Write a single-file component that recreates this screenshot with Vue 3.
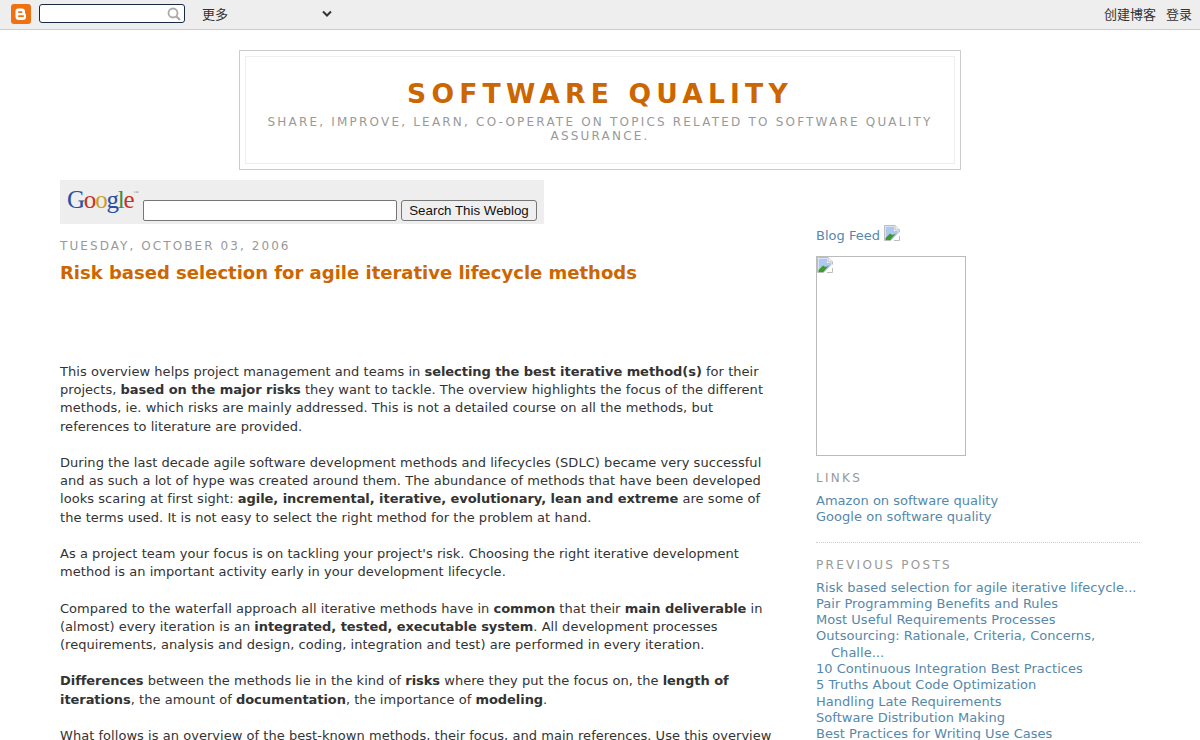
<script setup>
const links = ['Amazon on software quality', 'Google on software quality']
const posts = [
  'Risk based selection for agile iterative lifecycle...',
  'Pair Programming Benefits and Rules',
  'Most Useful Requirements Processes',
  'Outsourcing: Rationale, Criteria, Concerns, Challe...',
  '10 Continuous Integration Best Practices',
  '5 Truths About Code Optimization',
  'Handling Late Requirements',
  'Software Distribution Making',
  'Best Practices for Writing Use Cases'
]
</script>

<template>
  <div class="page">
    <div class="navbar">
      <svg class="logo" viewBox="0 0 20 20" width="20" height="20">
        <rect width="20" height="20" rx="3" fill="#ee7211" />
        <path d="M7 4.5h4a3 3 0 0 1 3 3V9a1.2 1.2 0 0 0 1 1v3a3 3 0 0 1-3 3H8a3.5 3.5 0 0 1-3.500-3.500V7A2.500 2.500 0 0 1 7 4.500z" fill="#fff" />
        <rect x="7" y="7.300" width="4.500" height="1.700" rx=".8" fill="#ee7211" />
        <rect x="7" y="11.300" width="6" height="1.700" rx=".8" fill="#ee7211" />
      </svg>
      <div class="navsearch">
        <svg viewBox="0 0 14 14" width="14" height="14" class="mag">
          <circle cx="6" cy="6" r="4.500" fill="none" stroke="#aaa" stroke-width="1.800" />
          <path d="M9.500 9.500l3.500 3.500" stroke="#aaa" stroke-width="2.200" />
        </svg>
      </div>
      <div class="more">
        <span class="navtext">更多</span>
        <svg viewBox="0 0 10 8" width="10" height="8"><path d="M1 1.500l4 4 4-4" fill="none" stroke="#333" stroke-width="2" /></svg>
      </div>
      <div class="nav-right">
        <span class="navtext">创建博客</span>
        <span class="navtext">登录</span>
      </div>
    </div>

    <header class="blog-header">
      <div class="header-inner">
        <h1>SOFTWARE QUALITY</h1>
        <p>SHARE, IMPROVE, LEARN, CO-OPERATE ON TOPICS RELATED TO SOFTWARE QUALITY ASSURANCE.</p>
      </div>
    </header>

    <div class="content">
      <main class="main">
        <form class="gsearch" @submit.prevent>
          <div class="glogo">
            <span class="b">G</span><span class="r">o</span><span class="y">o</span><span class="b">g</span><span class="g">l</span><span class="r">e</span><span class="tm">™</span>
          </div>
          <input type="text" class="ginput" />
          <button class="gbtn">Search This Weblog</button>
        </form>

        <h2 class="date">TUESDAY, OCTOBER 03, 2006</h2>
        <h3 class="title">Risk based selection for agile iterative lifecycle methods</h3>

        <div class="body">
          <p>This overview helps project management and teams in <b>selecting the best iterative method(s)</b> for their projects, <b>based on the major risks</b> they want to tackle. The overview highlights the focus of the different methods, ie. which risks are mainly addressed. This is not a detailed course on all the methods, but references to literature are provided.</p>
          <p>During the last decade agile software development methods and lifecycles (SDLC) became very successful and as such a lot of hype was created around them. The abundance of methods that have been developed looks scaring at first sight: <b>agile, incremental, iterative, evolutionary, lean and extreme</b> are some of the terms used. It is not easy to select the right method for the problem at hand.</p>
          <p>As a project team your focus is on tackling your project's risk. Choosing the right iterative development method is an important activity early in your development lifecycle.</p>
          <p>Compared to the waterfall approach all iterative methods have in <b>common</b> that their <b>main deliverable</b> in (almost) every iteration is an <b>integrated, tested, executable system</b>. All development processes (requirements, analysis and design, coding, integration and test) are performed in every iteration.</p>
          <p><b>Differences</b> between the methods lie in the kind of <b>risks</b> where they put the focus on, the <b>length of iterations</b>, the amount of <b>documentation</b>, the importance of <b>modeling</b>.</p>
          <p>What follows is an overview of the best-known methods, their focus, and main references. Use this overview</p>
        </div>
      </main>

      <aside class="side">
        <div class="feed">Blog Feed <svg class="broken" viewBox="0 0 16 16" width="16" height="16">
          <path d="M.5 15.500V.5H11l4.500 4.500v2.500" fill="#fff" stroke="#bdbdbd" />
          <path d="M11 .5V5h4.500" fill="#eee" stroke="#bdbdbd" />
          <path d="M1.500 1.500H10V6h4.500v2L7 15.500H1.500z" fill="#aec8f0" />
          <path d="M1.500 15.500V13L6 8.500l2.500 1.500 3.500-1.500L8 13l-2 2.500z" fill="#3f9a2e" />
          <path d="M.5 15.500h6" stroke="#bdbdbd" />
          <path d="M15.500 11v4.500H10" fill="none" stroke="#bdbdbd" />
        </svg></div>
        <div class="imgbox">
          <svg class="broken" viewBox="0 0 16 16" width="16" height="16">
            <path d="M.5 15.500V.5H11l4.500 4.500v2.500" fill="#fff" stroke="#bdbdbd" />
            <path d="M11 .5V5h4.500" fill="#eee" stroke="#bdbdbd" />
            <path d="M1.500 1.500H10V6h4.500v2L7 15.500H1.500z" fill="#aec8f0" />
            <path d="M1.500 15.500V13L6 8.500l2.500 1.500 3.500-1.500L8 13l-2 2.500z" fill="#3f9a2e" />
            <path d="M.5 15.500h6" stroke="#bdbdbd" />
            <path d="M15.500 11v4.500H10" fill="none" stroke="#bdbdbd" />
          </svg>
        </div>
        <h2 class="side-title links-title">LINKS</h2>
        <ul class="list">
          <li v-for="l in links" :key="l">{{ l }}</li>
        </ul>
        <div class="rule"></div>
        <h2 class="side-title">PREVIOUS POSTS</h2>
        <ul class="list">
          <li v-for="p in posts" :key="p">{{ p }}</li>
        </ul>
      </aside>
    </div>
  </div>
</template>

<style>
html, body { margin: 0; height: 740px; overflow: hidden; background: #fff; }
</style>

<style scoped>
.page { font-family: "DejaVu Sans", Verdana, sans-serif; font-size: 13px; color: #333; height: 740px; overflow: hidden; }
.navbar { background: #eee; border-bottom: 1px solid #ccc; display: flex; align-items: center; font-family: "Liberation Sans", "Noto Sans CJK SC", sans-serif; font-size: 13px; color: #333; padding-bottom: 1px; box-sizing: content-box; height: 28px; }
.navtext { margin-bottom: 2px; }
.logo { margin-left: 11px; flex: none; }
.navsearch { width: 146px; height: 19px; margin-left: 8px; margin-bottom: 1px; background: #fff; border: 1px solid #1a2a44; border-radius: 3px; display: flex; justify-content: flex-end; align-items: center; padding-right: 3px; box-sizing: border-box; }
.mag { flex: none; }
.more { display: flex; justify-content: space-between; align-items: center; width: 130px; margin-left: 17px; }
.nav-right { margin-left: auto; display: flex; gap: 10px; padding-right: 8px; }
.blog-header { width: 722px; height: 120px; margin: 20px auto 0; border: 1px solid #ccc; padding: 5px; box-sizing: border-box; }
.header-inner { height: 108px; box-sizing: border-box; border: 1px solid #eee; text-align: center; padding: 0 15px; }
h1 { margin: 0; padding-top: 21px; font-size: 26.600px; line-height: 32px; letter-spacing: 5.180px; color: #c60; font-weight: bold; font-family: "DejaVu Sans", sans-serif; }
.header-inner p { margin: 5px 0 0; font-size: 12px; line-height: 14px; letter-spacing: 2.200px; color: #999; }
.content { display: flex; padding: 0 60px; margin-top: 10px; }
.main { width: 716px; flex: none; }
.gsearch { width: 484px; height: 44px; background: #eee; display: flex; align-items: flex-end; box-sizing: border-box; padding-bottom: 3px; }
.glogo { width: 83px; height: 41px; box-sizing: border-box; padding: 0 0 0 7px; font-family: "Liberation Serif", serif; font-size: 25px; line-height: 26px; letter-spacing: -1.200px; }
.b { color: #2b4da8; } .r { color: #c8321e; } .y { color: #c9a227; } .g { color: #3c8c3c; }
.tm { font-size: 5px; vertical-align: 14px; color: #888; letter-spacing: 0; }
.ginput { width: 254px; height: 21px; padding: 0; margin: 0; border: 1px solid #767676; border-radius: 2px; background: #fff; box-sizing: border-box; }
.gbtn { width: 136px; height: 21px; margin-left: 4px; padding: 0 0 1px; white-space: nowrap; font-family: "Liberation Sans", sans-serif; font-size: 13.333px; color: #111; background: #efefef; border: 1px solid #767676; border-radius: 3px; box-sizing: border-box; }
.date { margin: 14px 0 0; font-size: 12px; line-height: 16px; font-weight: normal; letter-spacing: 2.080px; color: #999; }
.title { margin: 6px 0 0; font-size: 18px; line-height: 26px; color: #c60; font-weight: bold; }
.body { margin-top: 77px; line-height: 18.200px; width: 716px; letter-spacing: .04px; }
.body b { letter-spacing: -.06px; }
.body p { margin: 0 0 18.200px; }
.side { width: 324px; margin-left: 40px; flex: none; padding-top: 45px; color: #58a; letter-spacing: .03px; }
.feed { line-height: 18px; }
.broken { vertical-align: -1px; }
.imgbox { width: 148px; height: 198px; border: 1px solid #bbb; margin-top: 11px; line-height: 0; padding: 0; }
.side-title { margin: 0; font-size: 12px; line-height: 16px; font-weight: normal; letter-spacing: 2.300px; color: #999; }
.links-title { margin-top: 14px; }
.list { list-style: none; margin: 7px 0 0; padding: 0; }
.list li { line-height: 16.300px; padding-left: 15px; text-indent: -15px; }
.rule { border-bottom: 1px dotted #ccc; margin: 16px 0 14px; }
</style>
